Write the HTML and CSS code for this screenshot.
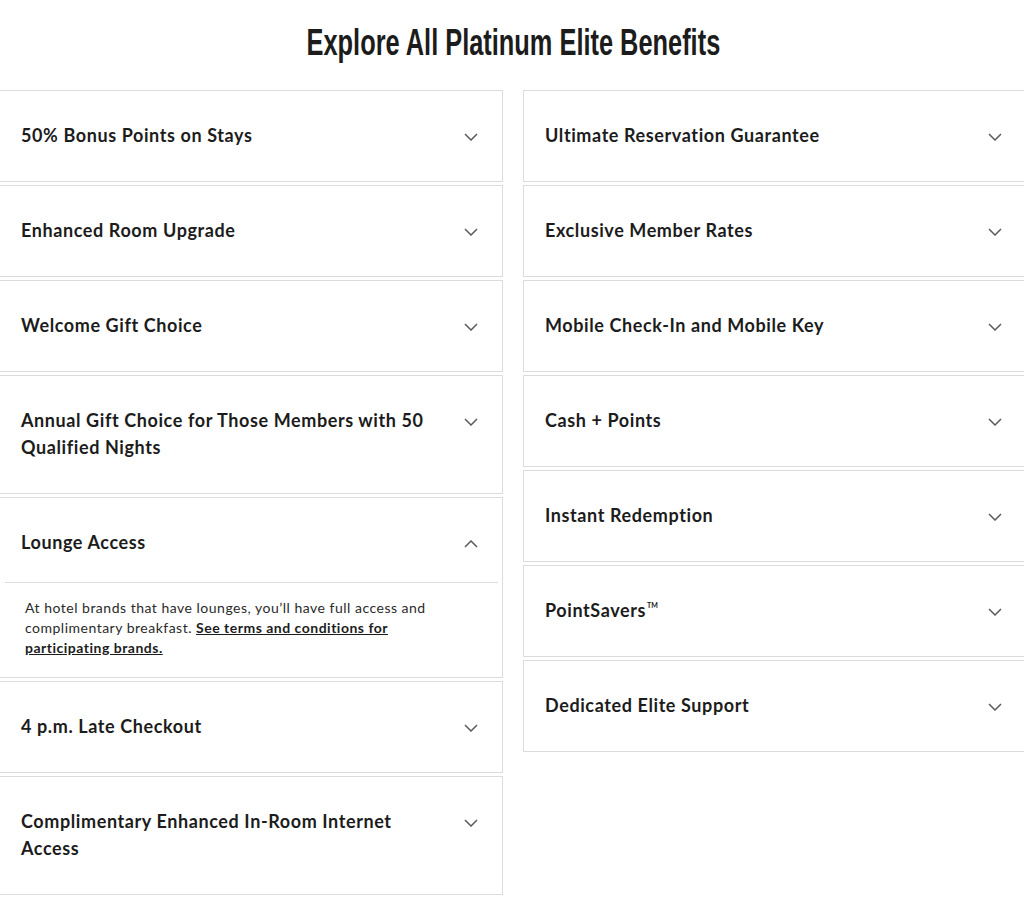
FILE: index.html
```html
<!DOCTYPE html>
<html lang="en">
<head>
<meta charset="utf-8">
<title>Explore All Platinum Elite Benefits</title>
<link rel="stylesheet" href="styles.css">
</head>
<body>
<main class="benefits">
  <h1 class="benefits-title"><span class="title-text">Explore All Platinum Elite Benefits</span></h1>
  <div class="benefits-grid">
    <div class="column">
      <div class="card"><div class="card-head"><span class="card-label">50% Bonus Points on Stays</span><svg class="chev" viewBox="0 0 14 8"><polyline points="1,1 7,7 13,1"/></svg></div></div>
      <div class="card"><div class="card-head"><span class="card-label">Enhanced Room Upgrade</span><svg class="chev" viewBox="0 0 14 8"><polyline points="1,1 7,7 13,1"/></svg></div></div>
      <div class="card"><div class="card-head"><span class="card-label">Welcome Gift Choice</span><svg class="chev" viewBox="0 0 14 8"><polyline points="1,1 7,7 13,1"/></svg></div></div>
      <div class="card"><div class="card-head"><span class="card-label">Annual Gift Choice for Those Members with 50 Qualified Nights</span><svg class="chev" viewBox="0 0 14 8"><polyline points="1,1 7,7 13,1"/></svg></div></div>
      <div class="card open"><div class="card-head"><span class="card-label">Lounge Access</span><svg class="chev" viewBox="0 0 14 8"><polyline points="1,7 7,1 13,7"/></svg></div>
        <div class="card-body">At hotel brands that have lounges, you’ll have full access and complimentary breakfast. <a href="#" class="card-link">See terms and conditions for participating brands.</a></div>
      </div>
      <div class="card"><div class="card-head"><span class="card-label">4 p.m. Late Checkout</span><svg class="chev" viewBox="0 0 14 8"><polyline points="1,1 7,7 13,1"/></svg></div></div>
      <div class="card"><div class="card-head"><span class="card-label">Complimentary Enhanced In-Room Internet Access</span><svg class="chev" viewBox="0 0 14 8"><polyline points="1,1 7,7 13,1"/></svg></div></div>
    </div>
    <div class="column">
      <div class="card"><div class="card-head"><span class="card-label">Ultimate Reservation Guarantee</span><svg class="chev" viewBox="0 0 14 8"><polyline points="1,1 7,7 13,1"/></svg></div></div>
      <div class="card"><div class="card-head"><span class="card-label">Exclusive Member Rates</span><svg class="chev" viewBox="0 0 14 8"><polyline points="1,1 7,7 13,1"/></svg></div></div>
      <div class="card"><div class="card-head"><span class="card-label">Mobile Check-In and Mobile Key</span><svg class="chev" viewBox="0 0 14 8"><polyline points="1,1 7,7 13,1"/></svg></div></div>
      <div class="card"><div class="card-head"><span class="card-label">Cash + Points</span><svg class="chev" viewBox="0 0 14 8"><polyline points="1,1 7,7 13,1"/></svg></div></div>
      <div class="card"><div class="card-head"><span class="card-label">Instant Redemption</span><svg class="chev" viewBox="0 0 14 8"><polyline points="1,1 7,7 13,1"/></svg></div></div>
      <div class="card"><div class="card-head"><span class="card-label">PointSavers<span class="tm">TM</span></span><svg class="chev" viewBox="0 0 14 8"><polyline points="1,1 7,7 13,1"/></svg></div></div>
      <div class="card"><div class="card-head"><span class="card-label">Dedicated Elite Support</span><svg class="chev" viewBox="0 0 14 8"><polyline points="1,1 7,7 13,1"/></svg></div></div>
    </div>
  </div>
</main>
</body>
</html>
```

FILE: styles.css
```css
* { box-sizing: border-box; }

html, body {
  margin: 0;
  padding: 0;
  background: #ffffff;
}

body {
  font-family: "Lato", "Open Sans", Arial, sans-serif;
  color: #1c1c1c;
  overflow-x: hidden;
}

.benefits {
  width: 1028px;
  margin-left: -1px;
}

.benefits-title {
  margin: 0 0 25px;
  padding-top: 21px;
  font-family: "Liberation Sans", Arial, sans-serif;
  font-size: 36px;
  line-height: 44px;
  font-weight: 700;
  text-align: center;
  color: #1c1c1c;
}

.title-text {
  display: inline-block;
  transform: scaleX(0.705);
  transform-origin: center;
  white-space: nowrap;
}

.benefits-grid {
  display: grid;
  grid-template-columns: 504px 504px;
  column-gap: 20px;
  align-items: start;
}

.column {
  display: flex;
  flex-direction: column;
  gap: 3px;
}

.card {
  border: 1px solid #dcdcdc;
  background: #fff;
}

.card-head {
  display: flex;
  align-items: flex-start;
  justify-content: space-between;
  padding: 31px 24px 32px 21px;
}

.card.open .card-head {
  padding-bottom: 26px;
}

.card-label {
  flex: 1;
  font-size: 18px;
  line-height: 27px;
  font-weight: 700;
  letter-spacing: 0.6px;
  color: #1c1c1c;
  padding-right: 24px;
}

.tm {
  display: inline-block;
  font-size: 7px;
  line-height: 10px;
  vertical-align: top;
  margin-top: 3px;
  margin-left: 1px;
  letter-spacing: 0;
}

.chev {
  flex: none;
  width: 14px;
  height: 8px;
  margin-top: 11px;
  fill: none;
  stroke: #5a5a5a;
  stroke-width: 1.5;
}

.card-body {
  margin: 0 4px 0 5px;
  border-top: 1px solid #dcdcdc;
  padding: 15px 40px 19px 20px;
  font-size: 14px;
  line-height: 20px;
  letter-spacing: 0.5px;
  color: #2a2a2a;
}

.card-link {
  color: #1c1c1c;
  font-weight: 700;
  text-decoration: underline;
}
```
